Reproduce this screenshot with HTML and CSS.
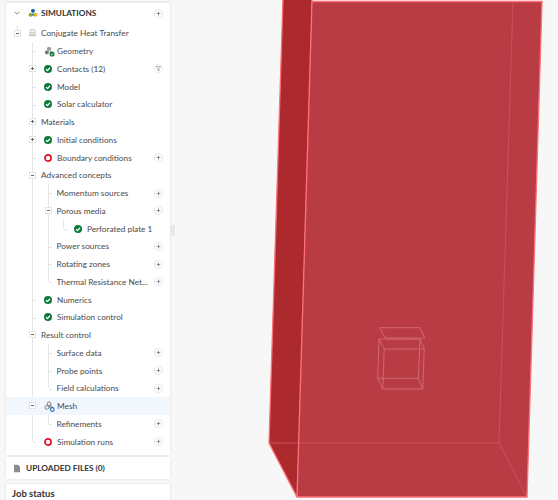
FILE: index.html

```html
<!DOCTYPE html>
<html lang="en">
<head>
    <meta charset="UTF-8">
    <title>Simulations</title>
    <link rel="stylesheet" href="styles.css">
</head>
<body>
    <svg class="defs" width="0" height="0">
        <symbol id="ok" viewBox="0 0 12 12">
            <circle cx="6" cy="6" r="6" fill="#0b7a3b"/>
            <path d="M3 6.2 5.2 8.3 9 4.1" fill="none" stroke="#fff" stroke-width="1.8"/>
        </symbol>
        <symbol id="todo" viewBox="0 0 12 12">
            <circle cx="6" cy="6" r="4.6" fill="none" stroke="#e30f25" stroke-width="2.6"/>
        </symbol>
        <symbol id="plus" viewBox="0 0 11 11">
            <circle cx="5.5" cy="5.5" r="5" fill="#fff" stroke="#dcdcdc" stroke-width=".8"/>
            <path d="M3.2 5.5h4.6M5.5 3.2v4.6" stroke="#666" stroke-width=".8"/>
        </symbol>
    </svg>

    <aside class="sidebar">
        <section class="panel tree">
            <div class="row header">
                <svg class="chevron" width="6" height="4" viewBox="0 0 8 5"><path d="M.7.7 4 4 7.3.7" fill="none" stroke="#666"/></svg>
                <svg class="logo" width="10" height="10" viewBox="0 0 14 14">
                    <path d="M7 1 9.6 2.5V5.4L7 6.9 4.4 5.4V2.5Z" fill="#1d62a8"/>
                    <path d="M3.6 6.6 6.2 8.1V11L3.6 12.5 1 11V8.1Z" fill="#7fae2e"/>
                    <path d="M10.4 6.6 13 8.1V11L10.4 12.5 7.8 11V8.1Z" fill="#e3b321"/>
                    <path d="M7 7.2 8 7.8V11L7 11.6 6 11V7.8Z" fill="#2a7f8e"/>
                </svg>
                <span class="title">Simulations</span>
                <svg class="add"><use href="#plus"/></svg>
            </div>

            <div class="row root">
                <span class="toggle minus"></span>
                <svg class="stack" width="9" height="8" viewBox="0 0 10 9"><path d="M2 1h6M1 3.5h3l1 1.2 1-1.2h3M1 7.5h8M1 5.8h8" fill="none" stroke="#aaa" stroke-width=".9"/></svg>
                <span class="name">Conjugate Heat Transfer</span>
            </div>

            <div class="branch b1">
                <div class="row d1 tick">
                    <svg class="state cubes" viewBox="0 0 13 13">
                        <path d="M6 .8 8.4 2V4.6L6 5.8 3.6 4.6V2Z" fill="#9a9a9a"/>
                        <path d="M3.4 5 5.6 6.2V8.8L3.4 10 1.2 8.8V6.2Z" fill="#777"/>
                        <path d="M7.4 5.2 9 6V8H6.6V6Z" fill="#bbb"/>
                        <circle cx="9.5" cy="9.5" r="3" fill="#0b7a3b"/>
                        <path d="M8 9.6 9.2 10.7 11 8.7" fill="none" stroke="#fff"/>
                    </svg>
                    <span class="name">Geometry</span>
                </div>
                <div class="row d1">
                    <span class="toggle"></span>
                    <svg class="state"><use href="#ok"/></svg>
                    <span class="name">Contacts (12)</span>
                    <svg class="add" viewBox="0 0 11 11">
                        <circle cx="5.5" cy="5.5" r="5" fill="#fff" stroke="#e4e4e4" stroke-width=".8"/>
                        <path d="M2.8 3h5.4L6.2 5.8V8.6L4.8 7.8V5.8Z" fill="none" stroke="#777" stroke-width=".7"/>
                    </svg>
                </div>
                <div class="row d1 tick">
                    <svg class="state"><use href="#ok"/></svg>
                    <span class="name">Model</span>
                </div>
                <div class="row d1 tick">
                    <svg class="state"><use href="#ok"/></svg>
                    <span class="name">Solar calculator</span>
                </div>
                <div class="row d1 group">
                    <span class="toggle"></span>
                    <span class="name">Materials</span>
                </div>
                <div class="row d1">
                    <span class="toggle"></span>
                    <svg class="state"><use href="#ok"/></svg>
                    <span class="name">Initial conditions</span>
                </div>
                <div class="row d1 tick">
                    <svg class="state"><use href="#todo"/></svg>
                    <span class="name">Boundary conditions</span>
                    <svg class="add"><use href="#plus"/></svg>
                </div>
                <div class="row d1 group">
                    <span class="toggle minus"></span>
                    <span class="name">Advanced concepts</span>
                </div>

                <div class="branch b2">
                    <div class="row d2 tick">
                        <span class="name">Momentum sources</span>
                        <svg class="add"><use href="#plus"/></svg>
                    </div>
                    <div class="row d2">
                        <span class="toggle minus"></span>
                        <span class="name">Porous media</span>
                        <svg class="add"><use href="#plus"/></svg>
                    </div>
                    <div class="branch b3">
                        <div class="row d3 tick">
                            <svg class="state"><use href="#ok"/></svg>
                            <span class="name">Perforated plate 1</span>
                        </div>
                    </div>
                    <div class="row d2 tick">
                        <span class="name">Power sources</span>
                        <svg class="add"><use href="#plus"/></svg>
                    </div>
                    <div class="row d2 tick">
                        <span class="name">Rotating zones</span>
                        <svg class="add"><use href="#plus"/></svg>
                    </div>
                    <div class="row d2 tick">
                        <span class="name">Thermal Resistance Network</span>
                        <svg class="add"><use href="#plus"/></svg>
                    </div>
                </div>

                <div class="row d1 tick">
                    <svg class="state"><use href="#ok"/></svg>
                    <span class="name">Numerics</span>
                </div>
                <div class="row d1 tick">
                    <svg class="state"><use href="#ok"/></svg>
                    <span class="name">Simulation control</span>
                </div>
                <div class="row d1 group">
                    <span class="toggle minus"></span>
                    <span class="name">Result control</span>
                </div>

                <div class="branch b2">
                    <div class="row d2 tick">
                        <span class="name">Surface data</span>
                        <svg class="add"><use href="#plus"/></svg>
                    </div>
                    <div class="row d2 tick">
                        <span class="name">Probe points</span>
                        <svg class="add"><use href="#plus"/></svg>
                    </div>
                    <div class="row d2 tick">
                        <span class="name">Field calculations</span>
                        <svg class="add"><use href="#plus"/></svg>
                    </div>
                </div>

                <div class="row d1 active">
                    <span class="toggle minus"></span>
                    <svg class="state cubes" viewBox="0 0 13 13">
                        <path d="M6 1 8.2 2.2V4.6L6 5.8 3.8 4.6V2.2ZM3.4 5.2 5.6 6.4V8.8L3.4 10 1.2 8.8V6.4ZM7.6 5.4 9.4 6.4V7.4H6.6V6Z" fill="#eef3fb" stroke="#555" stroke-width=".8"/>
                        <circle cx="9.8" cy="10" r="2.2" fill="#fff" stroke="#1c74bb" stroke-width="1.4"/>
                    </svg>
                    <span class="name">Mesh</span>
                </div>

                <div class="branch b2">
                    <div class="row d2 tick">
                        <span class="name">Refinements</span>
                        <svg class="add"><use href="#plus"/></svg>
                    </div>
                </div>

                <div class="row d1 tick">
                    <svg class="state"><use href="#todo"/></svg>
                    <span class="name">Simulation runs</span>
                    <svg class="add"><use href="#plus"/></svg>
                </div>
            </div>
        </section>

        <section class="panel files">
            <svg width="6" height="9" viewBox="0 0 7 9"><path d="M0 0H4.6L7 2.4V9H0Z" fill="#8c8c8c"/></svg>
            <span class="title">Uploaded files (0)</span>
        </section>

        <section class="panel status">Job status</section>
    </aside>

    <div class="splitter"></div>

    <main class="viewer">
        <svg width="388" height="500" viewBox="170 0 388 500">
            <path class="side" d="M283 -2 312 -2 297 497 269 443Z"/>
            <path class="front" d="M312 1.5 542 1.5 527 497 297 497Z"/>
            <g class="inner">
                <path d="M513 2 499 443 269 443M499 443 527 497"/>
            </g>
            <g class="edge">
                <path d="M283 -2 269 443 297 497 527 497 542 1.5 312 1.5 297 497M312 1.5 312 -2"/>
            </g>
            <g class="part">
                <path d="M379.7 327.7H420L424.7 338H385.3Z"/>
                <path d="M379 339 420 339.3 424.3 349H384.3ZM379 339 377.7 378.3 382.7 389H422.7L424.3 349M384.3 349 382.7 389M420 339.3 418.3 378.3 422.7 389M377.7 378.3H418.3"/>
            </g>
        </svg>
    </main>
</body>
</html>
```

FILE: styles.css

```css
* {
    margin: 0;
    padding: 0;
    box-sizing: border-box;
}

body {
    display: flex;
    height: 500px;
    overflow: hidden;
    background: #f7f7f7;
    color: #4a4a4a;
    font-family: 'Lato', sans-serif;
    font-size: 8.25px;
}

.defs {
    display: block;
    width: 0;
    height: 0;
}

.sidebar {
    flex: none;
    width: 164px;
    margin: 2px 0 0 6px;
}

.panel {
    background: #fff;
    box-shadow: 0 0 2px rgba(0, 0, 0, 0.12);
}

.tree {
    padding-top: 1px;
    height: 453px;
    border-top: 1px solid #ececec;
}

.row {
    position: relative;
    display: flex;
    align-items: center;
    height: 17.75px;
    padding-right: 7.5px;
    white-space: nowrap;
}

.header {
    height: 18px;
    margin-bottom: 2.6px;
    padding-left: 8px;
}

.chevron {
    margin-right: 7.5px;
}

.logo {
    margin-right: 3.5px;
}

.title {
    color: #333;
    font-weight: 700;
    text-transform: uppercase;
}

.root {
    padding-left: 22px;
}

.root::before {
    content: "";
    position: absolute;
    left: 11px;
    top: 0;
    width: 1px;
    height: 5px;
    background: #e6e6e6;
}

.stack {
    flex: none;
    margin-right: 4px;
}

.name {
    flex: 1;
    overflow: hidden;
    text-overflow: ellipsis;
}

.add {
    flex: none;
    width: 9px;
    height: 9px;
    margin-left: 3px;
}

.header .title {
    flex: 1;
}

.toggle {
    position: absolute;
    top: 5px;
    width: 7px;
    height: 7px;
    border: 1px solid #e4e4e4;
    background: #fff linear-gradient(#666, #666) center / 3px 1px no-repeat;
}

.toggle:not(.minus)::after {
    content: "";
    display: block;
    width: 1px;
    height: 3px;
    margin: 1px auto;
    background: #666;
}

.root .toggle {
    left: 8px;
}

.d1 .toggle {
    left: 23px;
}

.d2 .toggle {
    left: 39px;
}

.state {
    flex: none;
    width: 8px;
    height: 8px;
    margin-right: 5px;
}

.cubes {
    width: 11px;
    height: 11px;
    margin-right: 2px;
}

.d1 {
    padding-left: 38px;
}

.d1.group {
    padding-left: 35px;
}

.d2 {
    padding-left: 50.5px;
}

.d3 {
    padding-left: 68px;
}

.active {
    background: #f2f6fd;
}

.branch {
    position: relative;
}

.branch::before {
    content: "";
    position: absolute;
    top: 0;
    bottom: 9px;
    width: 1px;
    background: #e6e6e6;
}

.b1::before {
    left: 26px;
}

.b2::before {
    left: 42px;
}

.b3::before {
    left: 57px;
}

.tick::before {
    content: "";
    position: absolute;
    top: 9px;
    width: 3px;
    height: 1px;
    background: #e6e6e6;
}

.d1.tick::before {
    left: 27px;
}

.d2.tick::before {
    left: 43px;
}

.d3.tick::before {
    left: 58px;
}

.files {
    display: flex;
    align-items: center;
    gap: 6px;
    height: 22px;
    margin-top: 2px;
    padding-left: 8px;
}

.status {
    height: 30px;
    margin-top: 5px;
    padding: 4px 6px;
    color: #333;
    font-size: 9.5px;
    font-weight: 700;
}

.splitter {
    flex: none;
    align-self: flex-start;
    width: 5px;
    height: 11px;
    margin: 225px -5px 0 0;
    background: #e8e8e8;
}

.viewer {
    flex: 1;
}

.viewer svg {
    display: block;
}

.side {
    fill: #ac2a2e;
}

.front {
    fill: #b93c45;
}

.inner path {
    fill: none;
    stroke: #c9525b;
}

.edge path {
    fill: none;
    stroke: #ff7078;
    stroke-width: 1.3;
}

.part path {
    fill: none;
    stroke: #d8717a;
    stroke-width: 0.8;
}
```
